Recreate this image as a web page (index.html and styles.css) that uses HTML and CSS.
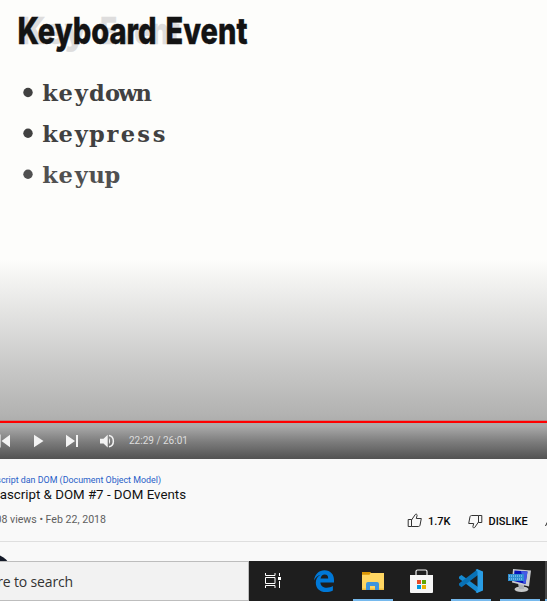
FILE: index.html
```html
<!DOCTYPE html>
<html lang="en">
<head>
<meta charset="utf-8">
<title>DOM Events</title>
<link rel="stylesheet" href="styles.css">
</head>
<body>
<main class="screen">
  <section class="video">
    <svg class="slide" width="547" height="260" viewBox="0 0 547 260">
      <text class="heading ghost" x="20" y="44" textLength="66" lengthAdjust="spacingAndGlyphs">Key</text>
      <text class="heading ghost" x="100" y="44" textLength="80" lengthAdjust="spacingAndGlyphs">Event</text>
      <text class="heading" x="17.500" y="44" textLength="139" lengthAdjust="spacingAndGlyphs">Keyboard</text>
      <text class="heading" x="165.500" y="44" textLength="82" lengthAdjust="spacingAndGlyphs">Event</text>
      <g class="bullets"><circle cx="28" cy="92.500" r="4.700"/><circle cx="28" cy="133.300" r="4.700"/><circle class="soft" cx="28" cy="174.200" r="4.700"/></g>
      <g class="items">
        <text y="101" x="50 65.600 81.200 96.800 112.400 128 143.600">keydown</text>
        <text y="142" x="50 65.600 81.200 96.800 112.400 128 143.600 159.200">keypress</text>
        <text class="soft" y="182.500" x="50 65.600 81.200 96.800 112.400">keyup</text>
      </g>
    </svg>
    <div class="progress"></div>
    <div class="controls">
      <svg class="buttons" width="120" height="24" viewBox="0 429 120 24">
        <path d="M0 434.500h.6v13H0zM1.500 441l8.500-6.200v12.400zM34 434.800l9.500 6.200-9.500 6.300zM66 434.800l9 6.200-9 6.300zM76 435h2v12h-2zM100 438.800h3.500l4.200-4v12.800l-4.200-4H100z"/>
        <path d="M109 438q2.200 3.200 0 6.300z"/>
        <path class="wave" d="M109 435.600c5.800 1.200 5.800 10 0 11.200"/>
      </svg>
      <span class="time">22:29 / 26:01</span>
    </div>
  </section>
  <section class="info">
    <a class="crumb">script dan DOM (Document Object Model)</a>
    <h1 class="title">ascript &amp; DOM #7 - DOM Events</h1>
    <div class="meta">
      <span class="views">08 views • Feb 22, 2018</span>
      <svg class="icon" width="16" height="16" viewBox="0 0 16 16"><path d="M1.200 6.500h3.300v7H1.200zM4.500 7L8.300 1.500c.8-.8 2-.2 1.800.9L9.300 5.500h5L13 12.300q-.3 1.200-1.600 1.200H4.500"/></svg>
      <span class="vote likes">1.7K</span>
      <svg class="icon flip" width="16" height="16" viewBox="0 0 16 16"><path d="M1.200 6.500h3.300v7H1.200zM4.500 7L8.300 1.500c.8-.8 2-.2 1.800.9L9.300 5.500h5L13 12.300q-.3 1.200-1.600 1.200H4.500"/></svg>
      <span class="vote dislikes">DISLIKE</span>
      <svg class="share" width="2" height="14" viewBox="0 0 2 14"><path d="M0 12L2 8v2L1 12z"/></svg>
    </div>
  </section>
  <section class="channel">
    <svg width="12" height="19" viewBox="0 0 12 19"><circle cx="-7" cy="30" r="18"/></svg>
  </section>
  <footer class="taskbar">
    <div class="search"><span>re to search</span></div>
    <div class="app task-view"><svg width="48" height="40" viewBox="249 561 48 40">
      <path class="line" d="M265.500 573v2.500h9.500V573M265.500 588v-2.500h9.500v2.500M265.500 577.500h9.500v6h-9.500zM279.500 573v3M279.500 581v7"/><path fill="#fff" d="M278 577h3v3h-3z"/>
    </svg></div>
    <div class="app edge"><svg width="52" height="40" viewBox="297 561 52 40">
      <path fill="#0078d7" d="M314 580.500c.8-6.300 5-10.200 10.500-10.200 6.200 0 9.500 4.400 9.500 9.800v2.400h-13.600c.2 3.700 3 5.200 6.400 5.200 2.300 0 4.300-.6 6.100-1.700v4.500c-2 1-4.200 1.500-6.900 1.500-6.300 0-10.200-3.700-10.200-9.300 0-3.400 1.600-6.300 4.700-8-2.800.8-4.900 2.700-6.500 5.800zm6.500-2h7.700c0-2.600-1-4.100-3.500-4.100-2.300 0-3.700 1.600-4.200 4.100z"/>
    </svg></div>
    <div class="app running explorer"><svg width="48" height="40" viewBox="349 561 48 40">
      <path fill="#ffd662" d="M362 573h22v17h-22z"/><path fill="#d99505" d="M362 572h9l-1.500 2.800H362z"/><path fill="#eebc3f" d="M362 588.500h22v1.500h-22z"/><path fill="#3d95dd" d="M366 590v-6q0-2 2-2h9q2 0 2 2v6h-4v-4h-5v4z"/>
    </svg></div>
    <div class="app store"><svg width="50" height="40" viewBox="397 561 50 40">
      <path class="handle" d="M416 576v-4.500q0-1.500 1.500-1.500h8q1.500 0 1.500 1.500v4.500"/><path fill="#f6f6f6" d="M410 575h23v17q0 1-1 1h-21q-1 0-1-1z"/><path fill="#e74b25" d="M417 580h4v4h-4z"/><path fill="#62a600" d="M422 580h4v4h-4z"/><path fill="#0099df" d="M417 585h4v4h-4z"/><path fill="#eab300" d="M422 585h4v4h-4z"/>
    </svg></div>
    <div class="app running code"><svg width="49" height="40" viewBox="447 561 49 40">
      <path fill="#168bd2" d="M459 576.800l2.500-1.900L478 587v6L459 578.500z"/><path fill="#0871b5" d="M459 585.200l2.500 2L478 575v-6l-19 14.500z"/><path fill="#299de5" d="M477 569l6 2.500v19l-6 2.500-1.500-1 2-1.500v-19l-2-1.500z"/>
    </svg></div>
    <div class="app running keyboard"><svg width="49" height="40" viewBox="496 561 49 40">
      <ellipse cx="521.500" cy="589.200" rx="7" ry="2.800" fill="#c5c7c8"/><path fill="#aeb2b7" d="M518 583h6v6h-5z"/><path fill="#c9cbd0" d="M513 569l18 1.500-2 16-17-4z"/><path fill="#0612b8" d="M514.500 570.500l13 1-2 12.500-12-3z"/><path fill="#435ae5" d="M521 571l6.500.7-2 12-2-.7z"/><path fill="#2e8ed1" d="M508 574h16v7h-16z"/><path class="keys" d="M509 576h14M509 579h14"/>
    </svg></div>
    <div class="app next"></div>
  </footer>
</main>
</body>
</html>
```

FILE: styles.css
```css
* { box-sizing: border-box; }
body { margin: 0; background: #f9f9f9; font-family: Roboto, sans-serif; }
.screen { width: 547px; height: 601px; overflow: hidden; display: flex; flex-direction: column; }
svg { display: block; flex: none; }
.video { height: 459px; flex: none; display: flex; flex-direction: column; background: linear-gradient(#fdfdfb 0, #fdfdfb 260px, #f3f3f1 280px, #dddddc 325px, #c7c7c6 370px, #b2b2b1 415px, #aaa 426px, #7c7c7c 442px, #525252 459px); }
.slide { height: 260px; }
.heading { font: 800 37px Inter, "Liberation Sans", sans-serif; fill: #131313; stroke: #131313; stroke-width: .4px; }
.ghost { fill: #dedddd; stroke: #dedddd; }
.items { font: bold 22.5px "DejaVu Serif", serif; fill: #414141; text-anchor: middle; }
.bullets { fill: #414141; }
.soft { fill: #505050; }
.progress { height: 2px; margin-top: 161px; background: #f00; box-shadow: 0 -1px rgba(210, 60, 60, .35); }
.controls { height: 36px; display: flex; align-items: center; }
.buttons { fill: #f3f3f3; }
.wave { fill: none; stroke: #f3f3f3; stroke-width: 1.5; }
.time { margin-left: 9px; font-size: 10px; line-height: 12px; color: #ddd; white-space: nowrap; }
.info { height: 83px; flex: none; padding-top: 15px; border-bottom: 1px solid #dfdfdf; }
.crumb, .title { display: flex; justify-content: flex-end; white-space: nowrap; margin: 0; }
.crumb { width: 161px; font-size: 8.9px; line-height: 12px; color: #2860c8; }
.title { width: 186px; font-size: 13.3px; font-weight: 400; line-height: 17px; color: #111; }
.meta { display: flex; align-items: center; height: 20px; margin-top: 8px; }
.views { width: 106px; display: flex; justify-content: flex-end; font-size: 10.6px; color: #606060; white-space: nowrap; margin-top: -4px; }
.icon { margin-left: 301px; fill: none; stroke: #333; stroke-width: 1; }
.flip { margin-left: 0; transform: rotate(180deg); }
.vote { font-size: 11px; font-weight: 500; color: #080808; white-space: nowrap; }
.likes { width: 39px; margin-left: 5px; }
.dislikes { width: 41px; margin-left: 6px; }
.share { margin-left: 16px; fill: #222; }
.channel { height: 19px; flex: none; fill: #151b29; }
.taskbar { height: 40px; flex: none; display: flex; background: #1e1e1e; }
.search { width: 249px; display: flex; align-items: center; padding-top: 2px; border: 1px solid #bdbdbd; border-left: 0; background: #f2f2f2; }
.search span { width: 73px; display: flex; justify-content: flex-end; font: 14px/20px "Open Sans", sans-serif; color: #333; white-space: nowrap; letter-spacing: -.15px; }
.app { flex: none; height: 40px; }
.running { background: linear-gradient(#76b9ed, #76b9ed) 4px bottom / 40px 2px no-repeat; }
.next { width: 2px; background: #454545; border-bottom: 2px solid #76b9ed; }
.line { fill: none; stroke: #fff; stroke-width: 1; }
.handle { fill: none; stroke: #f2f2f2; stroke-width: 1.2; }
.keys { fill: none; stroke: #a6ddff; stroke-width: 1; stroke-dasharray: 1 1; }
```
